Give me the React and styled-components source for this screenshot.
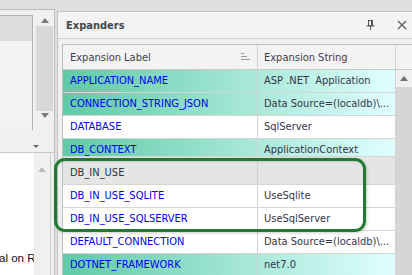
import React from 'react';
import styled, { createGlobalStyle } from 'styled-components';

const Global = createGlobalStyle`
  html, body { margin: 0; padding: 0; }
  body {
    width: 412px; height: 275px; overflow: hidden; background: #dfdfdf;
    font-family: "DejaVu Sans Condensed", "DejaVu Sans", sans-serif;
  }
`;

const Page = styled.div`
  position: relative;
  width: 412px;
  height: 275px;
  overflow: hidden;
  display: flex;
  align-items: flex-start;
  background: #dfdfdf;
`;

/* ---------- shared arrow glyph ---------- */
const ArrowSvg = ({ dir = 'up', color = '#7a7a7a', w = 8, h = 5 }) => (
  <svg width={w} height={h} viewBox={`0 0 ${w} ${h}`} style={{ display: 'block' }}>
    {dir === 'up' ? (
      <polygon points={`0,${h} ${w},${h} ${w / 2},0`} fill={color} />
    ) : (
      <polygon points={`0,0 ${w},0 ${w / 2},${h}`} fill={color} />
    )}
  </svg>
);

/* ---------- left panel ---------- */
const LeftPanel = styled.div`
  width: 55px;
  height: 266px;
  flex: none;
  margin-top: 9px;
  box-sizing: border-box;
  border-top: 1px solid #bdbdbd;
  border-right: 1px solid #bdbdbd;
  background: #f0f0f0;
  display: flex;
  flex-direction: column;
  overflow: hidden;
`;

const LeftTop = styled.div`
  display: flex;
  flex: none;
  gap: 3px;
  height: 115px;
  padding-top: 5px;
`;

const ListBox = styled.div`
  width: 33px;
  box-sizing: border-box;
  border-top: 1px solid #b4b4b4;
  border-right: 1px solid #b4b4b4;
  background: #f2f2f2;
  display: flex;
  flex-direction: column;
`;

const ListSelected = styled.div`
  height: 25px;
  background: #dcdcdc;
`;

const MiniScroll = styled.div`
  width: 17px;
  display: flex;
  flex-direction: column;
  align-items: center;
`;

const ArrowSlot = styled.div`
  height: ${(p) => p.$h}px;
  width: 100%;
  display: flex;
  align-items: center;
  justify-content: center;
`;

const MiniThumb = styled.div`
  width: 100%;
  height: 85px;
  background: #d8d8d8;
`;

const LeftBar = styled.div`
  height: 23px;
  flex: none;
  box-sizing: border-box;
  border-bottom: 1px solid #c9c9c9;
  display: flex;
  align-items: flex-end;
  padding: 0 0 4px 33px;
`;

const LeftBottom = styled.div`
  flex: 1;
  min-height: 0;
  display: flex;
`;

const WhiteArea = styled.div`
  width: 34px;
  background: #ffffff;
  overflow: hidden;
  display: flex;
  flex-direction: column;
  justify-content: flex-end;
  padding-bottom: 11px;
  box-sizing: border-box;
`;

const CutText = styled.div`
  font-family: "Liberation Sans", sans-serif;
  font-size: 11.5px;
  color: #111;
  white-space: nowrap;
  margin-left: -1px;
`;

const BottomScroll = styled.div`
  width: 16px;
  background: #f0f0f0;
  border-right: 1px solid #cfcfcf;
  padding-top: 14px;
  display: flex;
  justify-content: center;
  align-items: flex-start;
`;

/* ---------- right panel ---------- */
const RightPanel = styled.div`
  flex: 1;
  min-width: 0;
  margin-left: 2px;
  margin-top: 11px;
  height: 264px;
  box-sizing: border-box;
  border-left: 1px solid #c6c6c6;
  border-top: 1px solid #c6c6c6;
  background: #f0f0f0;
  display: flex;
  flex-direction: column;
  overflow: hidden;
`;

const TitleBar = styled.div`
  height: 27px;
  flex: none;
  box-sizing: border-box;
  border-bottom: 1px solid #d2d2d2;
  background: #f3f3f3;
  display: flex;
  align-items: center;
  justify-content: space-between;
  padding: 0 5px 0 8px;
`;

const Title = styled.div`
  font-weight: bold;
  font-size: 11px;
  color: #474747;
`;

const TitleIcons = styled.div`
  display: flex;
  align-items: center;
  gap: 22px;
`;

const PanelBody = styled.div`
  flex: 1;
  min-height: 0;
  padding: 5px 0 0 4px;
  display: flex;
`;

const Grid = styled.div`
  flex: 1;
  min-height: 0;
  box-sizing: border-box;
  border-top: 1px solid #bebebe;
  border-left: 1px solid #bebebe;
  background: #ffffff;
  display: flex;
  flex-direction: column;
`;

const Header = styled.div`
  display: grid;
  flex: none;
  grid-template-columns: 195px 138px 1fr;
  height: 25px;
  box-sizing: border-box;
  border-bottom: 1px solid #cacaca;
  background: #f3f3f3;
`;

const HeaderCell = styled.div`
  box-sizing: border-box;
  border-right: ${(p) => (p.$last ? 'none' : '1px solid #d2d2d2')};
  padding-left: ${(p) => p.$pad}px;
  padding-right: 7px;
  display: flex;
  align-items: center;
  justify-content: space-between;
  font-size: 11px;
  color: #3d3d4f;
  white-space: nowrap;
`;

const Body = styled.div`
  flex: 1;
  min-height: 0;
  display: flex;
`;

const Rows = styled.div`
  width: 333px;
  display: flex;
  flex-direction: column;
`;

const rowBg = {
  teal: 'linear-gradient(to right, #5fcaa6, #e0ffff)',
  white: '#ffffff',
  gray: '#e5e5e5',
};

const Row = styled.div`
  display: grid;
  grid-template-columns: 195px 138px;
  height: ${(p) => p.$h}px;
  flex: none;
  box-sizing: border-box;
  border-bottom: 1px solid #d5d5d5;
  background: ${(p) => rowBg[p.$kind]};
  overflow: hidden;
`;

const Cell = styled.div`
  box-sizing: border-box;
  border-right: 1px solid #d2d2d2;
  padding-left: ${(p) => p.$pad}px;
  padding-top: ${(p) => p.$top}px;
  line-height: 14px;
  overflow: hidden;
  white-space: pre;
  font-size: 11px;
  color: ${(p) => p.$color};
`;

const VScroll = styled.div`
  flex: 1;
  display: flex;
  flex-direction: column;
`;

const ScrollUp = styled.div`
  height: 17px;
  flex: none;
  background: #f0f0f0;
  display: flex;
  align-items: center;
  justify-content: center;
  padding-right: 1px;
`;

const Thumb = styled.div`
  flex: 1;
  background: #d6d6d6;
`;

const Highlight = styled.div`
  position: absolute;
  left: 54px;
  top: 158px;
  width: 312px;
  height: 74px;
  box-sizing: border-box;
  border: 3px solid #217a2f;
  border-radius: 11px;
  box-shadow: 1px 1px 3px rgba(0, 0, 0, 0.2), inset 1px 1px 2px rgba(0, 0, 0, 0.12);
  pointer-events: none;
`;

const PinIcon = () => (
  <svg width="9" height="10" viewBox="0 0 9 10" style={{ display: 'block' }}>
    <rect x="2.5" y="0.5" width="4" height="5" fill="none" stroke="#555" strokeWidth="1" />
    <rect x="5" y="1" width="1.5" height="4.5" fill="#555" />
    <rect x="0.5" y="5.5" width="8" height="1" fill="#555" />
    <rect x="4" y="6.5" width="1" height="3.5" fill="#555" />
  </svg>
);

const CloseIcon = () => (
  <svg width="10" height="10" viewBox="0 0 10 10" style={{ display: 'block' }}>
    <path d="M1 1 L9 9 M9 1 L1 9" stroke="#5a5a5a" strokeWidth="1.2" fill="none" />
  </svg>
);

const SortIcon = () => (
  <svg width="9" height="8" viewBox="0 0 9 8" style={{ display: 'block' }}>
    <rect x="0" y="0" width="3" height="1" fill="#9a9a9a" />
    <rect x="0" y="3" width="6" height="1" fill="#9a9a9a" />
    <rect x="0" y="6" width="9" height="1" fill="#9a9a9a" />
  </svg>
);

const rows = [
  { label: 'APPLICATION_NAME', value: 'ASP .NET  Application', kind: 'teal' },
  { label: 'CONNECTION_STRING_JSON', value: 'Data Source=(localdb)\\...', kind: 'teal' },
  { label: 'DATABASE', value: 'SqlServer', kind: 'white' },
  { label: 'DB_CONTEXT', value: 'ApplicationContext', kind: 'teal', h: 18 },
  { label: 'DB_IN_USE', value: '', kind: 'gray', dark: true, h: 28, top: 9 },
  { label: 'DB_IN_USE_SQLITE', value: 'UseSqlite', kind: 'white' },
  { label: 'DB_IN_USE_SQLSERVER', value: 'UseSqlServer', kind: 'white' },
  { label: 'DEFAULT_CONNECTION', value: 'Data Source=(localdb)\\...', kind: 'white' },
  { label: 'DOTNET_FRAMEWORK', value: 'net7.0', kind: 'teal' },
];

export default function App() {
  return (
    <>
      <Global />
      <Page>
        <LeftPanel>
          <LeftTop>
            <ListBox>
              <ListSelected />
            </ListBox>
            <MiniScroll>
              <ArrowSlot $h={11}>
                <ArrowSvg dir="up" />
              </ArrowSlot>
              <MiniThumb />
              <ArrowSlot $h={9}>
                <ArrowSvg dir="down" />
              </ArrowSlot>
            </MiniScroll>
          </LeftTop>
          <LeftBar>
            <ArrowSvg dir="down" w={6} h={3} color="#666" />
          </LeftBar>
          <LeftBottom>
            <WhiteArea>
              <CutText>al on R</CutText>
            </WhiteArea>
            <BottomScroll>
              <ArrowSvg dir="up" color="#bdbdbd" />
            </BottomScroll>
          </LeftBottom>
        </LeftPanel>

        <RightPanel>
          <TitleBar>
            <Title>Expanders</Title>
            <TitleIcons>
              <PinIcon />
              <CloseIcon />
            </TitleIcons>
          </TitleBar>
          <PanelBody>
            <Grid>
              <Header>
                <HeaderCell $pad={7}>
                  <span>Expansion Label</span>
                  <SortIcon />
                </HeaderCell>
                <HeaderCell $pad={6}>Expansion String</HeaderCell>
                <HeaderCell $pad={0} $last />
              </Header>
              <Body>
                <Rows>
                  {rows.map((r) => (
                    <Row key={r.label} $kind={r.kind} $h={r.h || 23}>
                      <Cell $pad={7} $top={r.top || 4} $color={r.dark ? '#333333' : '#0000ee'}>
                        {r.label}
                      </Cell>
                      <Cell $pad={6} $top={r.top || 4} $color="#353548">
                        {r.value}
                      </Cell>
                    </Row>
                  ))}
                </Rows>
                <VScroll>
                  <ScrollUp>
                    <ArrowSvg dir="up" color="#6f6f6f" />
                  </ScrollUp>
                  <Thumb />
                </VScroll>
              </Body>
            </Grid>
          </PanelBody>
        </RightPanel>
        <Highlight />
      </Page>
    </>
  );
}
